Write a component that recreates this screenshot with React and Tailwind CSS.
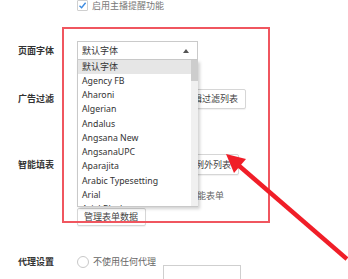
const CJK = { fontFamily: '"Noto Sans CJK SC", "Noto Sans", sans-serif' };
const LATIN = { fontFamily: '"Noto Sans", "Noto Sans CJK SC", sans-serif' };

const FONTS = [
  '默认字体',
  'Agency FB',
  'Aharoni',
  'Algerian',
  'Andalus',
  'Angsana New',
  'AngsanaUPC',
  'Aparajita',
  'Arabic Typesetting',
  'Arial',
  'Arial Black',
];

function Checkbox({ checked }) {
  return (
    <span className="flex h-[11px] w-[11px] shrink-0 items-center justify-center rounded-[1px] border border-[#cfcfcf] bg-white">
      {checked ? (
        <svg width="9" height="9" viewBox="0 0 9 9">
          <path d="M1.5 4.8 L3.6 6.8 L7.6 1.8" fill="none" stroke="#3d8be0" strokeWidth="1.4" />
        </svg>
      ) : null}
    </span>
  );
}

function Button({ children, className = '' }) {
  return (
    <div
      className={`flex items-center justify-end rounded-[2px] border border-[#d6d6d6] bg-white pr-[7px] text-[9px] text-[#444] shadow-[0_1px_1px_rgba(0,0,0,0.06)] ${className}`}
    >
      {children}
    </div>
  );
}

function Label({ children }) {
  return <div className="w-[77px] shrink-0 pl-[18px] text-[9px] font-semibold text-[#333]">{children}</div>;
}

export default function App() {
  return (
    <div className="relative h-[279px] w-[348px] overflow-hidden bg-white" style={CJK}>
      <div className="flex flex-col">
        <div className="flex h-[11px] items-center gap-[4px] pl-[77px]">
          <Checkbox checked />
          <span className="text-[9px] text-[#777]">启用主播提醒功能</span>
        </div>

        <div className="mt-[30px] flex items-center">
          <Label>页面字体</Label>
          <div className="flex h-[19px] w-[121px] items-center justify-between border border-[#cacaca] bg-white pl-[4px] pr-[8px]">
            <span className="text-[9px] text-[#333]">默认字体</span>
            <svg width="6" height="4" viewBox="0 0 6 4">
              <polygon points="3,0 6,4 0,4" fill="#555" />
            </svg>
          </div>
        </div>

        <div className="mt-[29px] flex items-center">
          <Label>广告过滤</Label>
          <div className="flex items-center gap-[6px]">
            <Button className="h-[20px] w-[90px]">管理广告规则</Button>
            <Button className="h-[20px] w-[73px]">编辑过滤列表</Button>
          </div>
        </div>

        <div className="mt-[45px] flex items-start">
          <div className="flex h-[21px] items-center">
            <Label>智能填表</Label>
          </div>
          <div className="flex flex-col">
            <div className="flex items-center gap-[6px]">
              <Button className="h-[21px] w-[90px]">编辑例外规则</Button>
              <Button className="h-[21px] w-[66px]">管理例外列表</Button>
            </div>
            <div className="mt-[15px] flex h-[11px] items-center gap-[1px]">
              <Checkbox checked />
              <span className="text-[9px] text-[#666]">自动保存表单数据并启用智能表单</span>
            </div>
            <Button className="mt-[7px] h-[18px] w-[69px] justify-center pr-0">管理表单数据</Button>
          </div>
        </div>

        <div className="mt-[30px] flex items-start">
          <div className="flex h-[12px] items-center">
            <Label>代理设置</Label>
          </div>
          <div className="flex h-[12px] items-center gap-[4px]">
            <span className="h-[12px] w-[12px] rounded-full border border-[#c8c8c8] bg-white" />
            <span className="text-[9px] text-[#666]">不使用任何代理</span>
          </div>
          <div className="ml-[7px] mt-[9px] h-[20px] w-[78px] border border-[#cfcfcf] bg-white" />
        </div>
      </div>

      {/* open dropdown list */}
      <div className="absolute left-[77px] top-[60px] flex h-[147px] w-[121px] border-b border-l border-[#c9c9c9] bg-white shadow-[2px_2px_3px_rgba(0,0,0,0.18)]">
        <div className="flex flex-1 flex-col overflow-hidden">
          {FONTS.map((name, i) => (
            <div
              key={name}
              className={`flex h-[14.25px] shrink-0 items-center pl-[4px] text-[#333] ${i === 0 ? 'bg-[#e6e6e6] text-[9px]' : 'text-[8.75px]'}`}
              style={i === 0 ? CJK : LATIN}
            >
              {name}
            </div>
          ))}
        </div>
        <div className="flex w-[7px] flex-col bg-[#f0f0f0]">
          <div className="h-[21px] bg-[#cdcdcd]" />
        </div>
      </div>

      {/* annotation */}
      <div className="absolute left-[62px] top-[27px] h-[196px] w-[208px] border-2 border-[#f0565f]" />
      <svg className="absolute left-0 top-0" width="348" height="279" viewBox="0 0 348 279">
        <line x1="347" y1="259" x2="237" y2="164" stroke="#f01e28" strokeWidth="4.5" />
        <polygon points="226,154 246,159 234,173" fill="#f01e28" />
      </svg>
    </div>
  );
}
